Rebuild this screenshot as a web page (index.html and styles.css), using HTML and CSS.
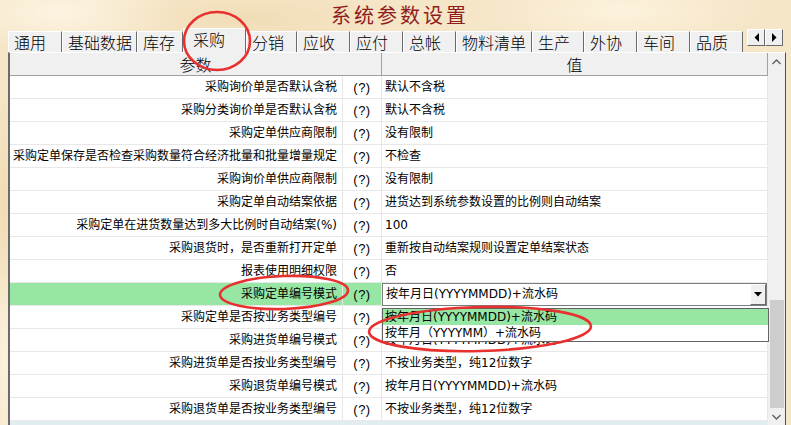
FILE: index.html
```html
<!DOCTYPE html>
<html lang="zh-CN">
<head>
<meta charset="utf-8">
<title>系统参数设置</title>
<link rel="stylesheet" href="styles.css">
</head>
<body>
<div class="title">系统参数设置</div>

<div class="tabbar">
  <div class="tabs">
    <div class="tab">通用</div>
    <div class="tab">基础数据</div>
    <div class="tab">库存</div>
    <div class="tab active">采购</div>
    <div class="tab">分销</div>
    <div class="tab">应收</div>
    <div class="tab">应付</div>
    <div class="tab">总帐</div>
    <div class="tab">物料清单</div>
    <div class="tab">生产</div>
    <div class="tab">外协</div>
    <div class="tab">车间</div>
    <div class="tab">品质</div>
  </div>
  <div class="arrows">
    <div class="arrow"><svg width="7" height="9" viewBox="0 0 7 9"><polygon points="6,0 6,9 1.5,4.5" fill="#000"/></svg></div>
    <div class="arrow"><svg width="7" height="9" viewBox="0 0 7 9"><polygon points="1,0 1,9 5.5,4.5" fill="#000"/></svg></div>
  </div>
</div>

<div class="panel">
  <div class="table">
    <div class="head">
      <div class="hcell">参数</div>
      <div class="hcell">值</div>
    </div>

    <div class="row"><div class="pcell">采购询价单是否默认含税</div><div class="qcell">(?)</div><div class="vcell">默认不含税</div></div>
    <div class="row"><div class="pcell">采购分类询价单是否默认含税</div><div class="qcell">(?)</div><div class="vcell">默认不含税</div></div>
    <div class="row"><div class="pcell">采购定单供应商限制</div><div class="qcell">(?)</div><div class="vcell">没有限制</div></div>
    <div class="row"><div class="pcell">采购定单保存是否检查采购数量符合经济批量和批量增量规定</div><div class="qcell">(?)</div><div class="vcell">不检查</div></div>
    <div class="row"><div class="pcell">采购询价单供应商限制</div><div class="qcell">(?)</div><div class="vcell">没有限制</div></div>
    <div class="row"><div class="pcell">采购定单自动结案依据</div><div class="qcell">(?)</div><div class="vcell">进货达到系统参数设置的比例则自动结案</div></div>
    <div class="row"><div class="pcell">采购定单在进货数量达到多大比例时自动结案(%)</div><div class="qcell">(?)</div><div class="vcell">100</div></div>
    <div class="row"><div class="pcell">采购退货时，是否重新打开定单</div><div class="qcell">(?)</div><div class="vcell">重新按自动结案规则设置定单结案状态</div></div>
    <div class="row"><div class="pcell">报表使用明细权限</div><div class="qcell">(?)</div><div class="vcell">否</div></div>
    <div class="row selected">
      <div class="pcell">采购定单编号模式</div><div class="qcell">(?)</div>
      <div class="vcell combo-cell">
        <div class="combo">
          <span class="combo-text">按年月日(YYYYMMDD)+流水码</span>
          <span class="combo-btn"><svg width="8" height="5" viewBox="0 0 8 5"><polygon points="0,0 8,0 4,4.5" fill="#000"/></svg></span>
        </div>
      </div>
    </div>
    <div class="row"><div class="pcell">采购定单是否按业务类型编号</div><div class="qcell">(?)</div><div class="vcell"></div></div>
    <div class="row"><div class="pcell">采购进货单编号模式</div><div class="qcell">(?)</div><div class="vcell">按年月日(YYYYMMDD)+流水码</div></div>
    <div class="row"><div class="pcell">采购进货单是否按业务类型编号</div><div class="qcell">(?)</div><div class="vcell">不按业务类型，纯12位数字</div></div>
    <div class="row"><div class="pcell">采购退货单编号模式</div><div class="qcell">(?)</div><div class="vcell">按年月日(YYYYMMDD)+流水码</div></div>
    <div class="row"><div class="pcell">采购退货单是否按业务类型编号</div><div class="qcell">(?)</div><div class="vcell">不按业务类型，纯12位数字</div></div>
  </div>

  <div class="scrollbar">
    <div class="sb-btn"><svg width="9" height="6" viewBox="0 0 9 6"><polyline points="0.5,5 4.5,1 8.5,5" fill="none" stroke="#606060" stroke-width="1.4"/></svg></div>
    <div class="sb-track"><div class="sb-thumb"></div></div>
    <div class="sb-btn"><svg width="9" height="6" viewBox="0 0 9 6"><polyline points="0.5,1 4.5,5 8.5,1" fill="none" stroke="#606060" stroke-width="1.4"/></svg></div>
  </div>
</div>

<div class="dropdown">
  <div class="ditem hl">按年月日(YYYYMMDD)+流水码</div>
  <div class="ditem">按年月（YYYYMM）+流水码</div>
</div>

<svg class="marks" width="791" height="425" viewBox="0 0 791 425">
  <ellipse cx="217" cy="41" rx="33" ry="29" fill="none" stroke="#e8302e" stroke-width="2.6"/>
  <ellipse cx="284" cy="292.5" rx="64" ry="16.5" fill="none" stroke="#e8302e" stroke-width="2.6" transform="rotate(-2 284 292.5)"/>
  <ellipse cx="480" cy="329" rx="111" ry="22" fill="none" stroke="#e8302e" stroke-width="2.6" transform="rotate(-1.5 480 329)"/>
</svg>
</body>
</html>
```

FILE: styles.css
```css
* { box-sizing: border-box; margin: 0; padding: 0; }

html, body { width: 791px; height: 425px; overflow: hidden; }

body {
  position: relative;
  font-family: "DejaVu Sans", "Noto Sans CJK SC", sans-serif;
  color: #000;
  background-color: #f6e6c8;
  background-image:
    radial-gradient(ellipse 120px 40px at 60px 12px, rgba(255,249,235,0.7), rgba(255,249,235,0) 100%),
    radial-gradient(ellipse 160px 30px at 250px 18px, rgba(236,212,168,0.55), rgba(236,212,168,0) 100%),
    radial-gradient(ellipse 140px 40px at 620px 10px, rgba(255,247,230,0.7), rgba(255,247,230,0) 100%),
    radial-gradient(ellipse 10px 120px at 4px 200px, rgba(238,214,170,0.7), rgba(238,214,170,0) 100%),
    radial-gradient(ellipse 10px 120px at 4px 360px, rgba(255,247,230,0.7), rgba(255,247,230,0) 100%);
}

.title {
  height: 28px;
  display: flex;
  justify-content: center;
  align-items: center;
  padding-left: 9px;
  font-family: "Noto Sans CJK SC", sans-serif;
  font-size: 20px;
  letter-spacing: 3px;
  color: #8f1d1d;
}

/* ---------- tabs ---------- */
.tabbar {
  display: flex;
  height: 24px;
  margin-left: 8px;
}

.tabs {
  display: grid;
  grid-template-columns: 54px 75px 46px 63px 51px 53px 53px 53px 76px 52px 53px 53px 53px;
  align-items: end;
  height: 24px;
}

.tab {
  height: 21px;
  background: #f0f0f0;
  border-top: 1px solid #ffffff;
  border-left: 1px solid #ffffff;
  border-right: 1px solid #6a6a6a;
  font-family: "Noto Sans CJK SC", sans-serif;
  font-weight: 300;
  font-size: 16px;
  line-height: 20px;
  padding-left: 5px;
  white-space: nowrap;
}

.tab.active {
  position: relative;
  height: 25px;
  margin-bottom: -1px;
  padding-left: 9px;
  line-height: 21px;
}

.arrows {
  display: flex;
  margin-left: 4px;
  margin-top: 1px;
  height: 17px;
}

.arrow {
  width: 18px;
  height: 17px;
  background: #f0f0f0;
  border-top: 1px solid #ffffff;
  border-left: 1px solid #ffffff;
  border-right: 1px solid #6a6a6a;
  border-bottom: 1px solid #6a6a6a;
  display: flex;
  align-items: center;
  justify-content: center;
}

/* ---------- panel ---------- */
.panel {
  display: flex;
  margin-left: 8px;
  width: 778px;
  height: 373px;
  border-top: 1px solid #ffffff;
  border-left: 2px solid #6b6b6b;
  border-right: 1px solid #505050;
}

.table {
  width: 758px;
  background: #e1edf1;
}

.head {
  display: grid;
  grid-template-columns: 372px 386px;
  height: 23px;
  background: #f0f0f0;
  border-bottom: 1px solid #a0a0a0;
}

.hcell {
  font-family: "Noto Sans CJK SC", sans-serif;
  font-weight: 300;
  font-size: 16px;
  line-height: 22px;
  text-align: center;
  border-right: 1px solid #a0a0a0;
}

.row {
  display: grid;
  grid-template-columns: 333px 39px 386px;
  height: 23px;
  background: #ffffff;
  font-size: 12px;
}

.row > div {
  border-bottom: 1px solid #e8e8e8;
  border-right: 1px solid #e8e8e8;
  line-height: 23px;
  white-space: nowrap;
  overflow: hidden;
}

.pcell { text-align: right; padding-right: 5px; }
.qcell {
  text-align: center;
  font-family: "Liberation Sans", sans-serif;
  font-size: 13px;
  letter-spacing: 0.5px;
}
.vcell { padding-left: 3px; }

.row.selected .pcell,
.row.selected .qcell { background: #98e6a3; }

.row > .combo-cell {
  padding: 0;
  border-bottom: none;
}

.combo {
  display: flex;
  height: 23px;
  border: 1px solid #7d7d7d;
  background: #ffffff;
}

.combo-text {
  flex: 1;
  padding-left: 3px;
  line-height: 21px;
}

.combo-btn {
  width: 16px;
  height: 21px;
  background: #f0f0f0;
  border-top: 1px solid #ffffff;
  border-left: 1px solid #ffffff;
  border-right: 1px solid #6a6a6a;
  border-bottom: 1px solid #6a6a6a;
  display: flex;
  align-items: center;
  justify-content: center;
}

/* ---------- scrollbar ---------- */
.scrollbar {
  width: 17px;
  background: #f0f0f0;
  display: flex;
  flex-direction: column;
}

.sb-btn {
  height: 17px;
  display: flex;
  align-items: center;
  justify-content: center;
}

.sb-track {
  flex: 1;
  display: flex;
  flex-direction: column;
  justify-content: flex-end;
  padding: 0 1px 0 2px;
}

.sb-thumb {
  height: 108px;
  background: #cdcdcd;
}

/* ---------- dropdown list (overlay) ---------- */
.dropdown {
  position: absolute;
  left: 382px;
  top: 308px;
  width: 387px;
  height: 34px;
  border: 1px solid #646464;
  background: #ffffff;
  font-size: 12px;
}

.ditem {
  height: 16px;
  line-height: 16px;
  padding-left: 2px;
  white-space: nowrap;
}

.ditem.hl { background: #98e6a3; }

/* ---------- annotation marks ---------- */
.marks {
  position: absolute;
  left: 0;
  top: 0;
  pointer-events: none;
}
```
